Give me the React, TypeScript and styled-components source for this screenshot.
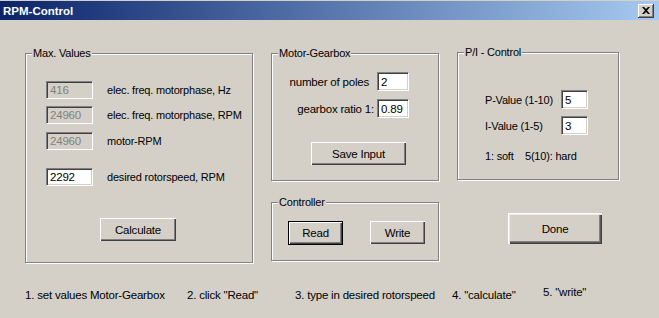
import React from 'react';
import styled, { createGlobalStyle } from 'styled-components';

const GlobalStyle = createGlobalStyle`
  html, body {
    margin: 0;
    padding: 0;
    background: #d4d0c8;
  }
`;

const face = '#d4d0c8';

const Window = styled.div`
  width: 659px;
  height: 318px;
  background: ${face};
  display: flex;
  flex-direction: column;
  overflow: hidden;
  font-family: 'Liberation Sans', Arial, sans-serif;
  font-size: 11px;
  letter-spacing: -0.2px;
  color: #000;
`;

const TitleBar = styled.div`
  height: 19px;
  margin-top: 1px;
  background: linear-gradient(to right, #0a246a, #a6caf0);
  display: flex;
  align-items: center;
  justify-content: space-between;
  padding: 0 5px 0 3px;
`;

const Title = styled.span`
  color: #fff;
  font-weight: bold;
  font-size: 11.5px;
  letter-spacing: 0;
`;

const CloseButton = styled.div`
  width: 16px;
  height: 14px;
  box-sizing: border-box;
  background: ${face};
  display: flex;
  align-items: center;
  justify-content: center;
  box-shadow: inset -1px -1px 0 #404040, inset 1px 1px 0 #fff, inset -2px -2px 0 #808080;
`;

const Body = styled.div`
  display: flex;
  flex-direction: column;
  padding: 33px 0 0 25px;
`;

const Columns = styled.div`
  display: flex;
  align-items: flex-start;
`;

const Column = styled.div<{ $left?: number; $top?: number }>`
  display: flex;
  flex-direction: column;
  margin-left: ${(p) => p.$left ?? 0}px;
  margin-top: ${(p) => p.$top ?? 0}px;
`;

const Group = styled.div<{ $w: number; $h: number; $top?: number }>`
  position: relative;
  box-sizing: border-box;
  width: ${(p) => p.$w - 1}px;
  height: ${(p) => p.$h - 1}px;
  margin-top: ${(p) => p.$top ?? 0}px;
  border: 1px solid #808080;
  box-shadow: inset 1px 1px 0 #fff, 1px 1px 0 #fff;
  display: flex;
  flex-direction: column;
`;

const Legend = styled.span`
  position: absolute;
  top: -7px;
  left: 6px;
  padding: 0 1px 0 1px;
  background: ${face};
  line-height: 13px;
`;

const Field = styled.div<{ $w: number; $h?: number; $disabled?: boolean }>`
  box-sizing: border-box;
  width: ${(p) => p.$w}px;
  height: ${(p) => p.$h ?? 18}px;
  flex-shrink: 0;
  background: ${(p) => (p.$disabled ? face : '#fff')};
  color: ${(p) => (p.$disabled ? '#808080' : '#000')};
  border-top: 1px solid #808080;
  border-left: 1px solid #808080;
  border-right: 1px solid #fff;
  border-bottom: 1px solid #fff;
  box-shadow: inset 1px 1px 0 #404040, inset -1px -1px 0 ${face};
  padding: 0 0 0 3px;
  display: flex;
  align-items: center;
  font-size: 11.5px;
`;

const ValueRows = styled.div`
  display: flex;
  flex-direction: column;
  padding: 27px 0 0 20px;
`;

const ValueRow = styled.div<{ $top: number }>`
  display: flex;
  align-items: center;
  gap: 14px;
  margin-top: ${(p) => p.$top}px;
`;

const Label = styled.span``;

const Button = styled.div<{ $w: number; $h?: number; $focused?: boolean; $default?: boolean }>`
  box-sizing: border-box;
  width: ${(p) => p.$w}px;
  height: ${(p) => p.$h ?? 23}px;
  background: ${face};
  display: flex;
  align-items: center;
  justify-content: center;
  font-size: 11.5px;
  ${(p) =>
    p.$focused
      ? `border: 1px solid #000;
         box-shadow: inset 1px 1px 0 #fff, inset -1px -1px 0 #404040, inset -2px -2px 0 #808080;`
      : p.$default
        ? `box-shadow: inset 1px 1px 0 #fff, inset 2px 2px 0 #eeeae2, inset -1px -1px 0 #404040, inset -2px -2px 0 #5a5a5a, inset -3px -3px 0 #808080;`
        : `box-shadow: inset 1px 1px 0 #fff, inset -1px -1px 0 #404040, inset -2px -2px 0 #808080;`}
`;

const ButtonSlot = styled.div<{ $left: number; $top: number }>`
  display: flex;
  margin: ${(p) => p.$top}px 0 0 ${(p) => p.$left}px;
`;

const ParamGrid = styled.div`
  display: grid;
  grid-template-columns: 105px 32px;
  row-gap: 8px;
  padding: 18px 0 0 0;
  align-items: center;
`;

const ParamLabel = styled.span<{ $pad: number }>`
  text-align: right;
  padding-right: ${(p) => p.$pad}px;
  font-size: 11.5px;
`;

const ButtonRow = styled.div`
  display: flex;
  gap: 27px;
  padding: 18px 0 0 16px;
`;

const PIGrid = styled.div`
  display: grid;
  grid-template-columns: 76px 27px;
  row-gap: 7px;
  padding: 37px 0 0 27px;
  align-items: center;
`;

const Note = styled.div`
  padding: 15px 0 0 27px;
  white-space: pre;
`;

const Steps = styled.div`
  display: grid;
  grid-template-columns: 162px 108px 157px 91px auto;
  margin-top: 26px;
  font-size: 11.5px;
`;

const Step = styled.span<{ $raise?: number }>`
  position: relative;
  top: ${(p) => -(p.$raise ?? 0)}px;
  white-space: nowrap;
`;

export default function App() {
  return (
    <>
      <GlobalStyle />
      <Window>
        <TitleBar>
          <Title>RPM-Control</Title>
          <CloseButton>
            <svg width="8" height="7" viewBox="0 0 8 7">
              <path d="M0 0h2l2 2 2-2h2L5 3.5 8 7H6L4 5 2 7H0l3-3.5z" fill="#000" />
            </svg>
          </CloseButton>
        </TitleBar>
        <Body>
          <Columns>
            <Column>
              <Group $w={229} $h={211}>
                <Legend>Max. Values</Legend>
                <ValueRows>
                  <ValueRow $top={0}>
                    <Field $w={47} $disabled>416</Field>
                    <Label>elec. freq. motorphase, Hz</Label>
                  </ValueRow>
                  <ValueRow $top={7}>
                    <Field $w={47} $disabled>24960</Field>
                    <Label>elec. freq. motorphase, RPM</Label>
                  </ValueRow>
                  <ValueRow $top={8}>
                    <Field $w={47} $disabled>24960</Field>
                    <Label>motor-RPM</Label>
                  </ValueRow>
                  <ValueRow $top={18}>
                    <Field $w={47}>2292</Field>
                    <Label>desired rotorspeed, RPM</Label>
                  </ValueRow>
                </ValueRows>
                <ButtonSlot $left={74} $top={32}>
                  <Button $w={76}>Calculate</Button>
                </ButtonSlot>
              </Group>
            </Column>
            <Column $left={18}>
              <Group $w={169} $h={129}>
                <Legend>Motor-Gearbox</Legend>
                <ParamGrid>
                  <ParamLabel $pad={8}>number of poles</ParamLabel>
                  <Field $w={32} $h={19}>2</Field>
                  <ParamLabel $pad={3}>gearbox ratio 1:</ParamLabel>
                  <Field $w={32} $h={19}>0.89</Field>
                </ParamGrid>
                <ButtonSlot $left={39} $top={24}>
                  <Button $w={95}>Save Input</Button>
                </ButtonSlot>
              </Group>
              <Group $w={169} $h={60} $top={21}>
                <Legend>Controller</Legend>
                <ButtonRow>
                  <Button $w={55} $h={24} $focused>Read</Button>
                  <Button $w={55}>Write</Button>
                </ButtonRow>
              </Group>
            </Column>
            <Column $left={18} $top={-1}>
              <Group $w={163} $h={129}>
                <Legend>P/I - Control</Legend>
                <PIGrid>
                  <Label>P-Value (1-10)</Label>
                  <Field $w={27} $h={19}>5</Field>
                  <Label>I-Value (1-5)</Label>
                  <Field $w={27} $h={19}>3</Field>
                </PIGrid>
                <Note>{'1: soft    5(10): hard'}</Note>
              </Group>
              <ButtonSlot $left={51} $top={33}>
                <Button $w={94} $h={31} $default>Done</Button>
              </ButtonSlot>
            </Column>
          </Columns>
          <Steps>
            <Step>1. set values Motor-Gearbox</Step>
            <Step>2. click "Read"</Step>
            <Step>3. type in desired rotorspeed</Step>
            <Step>4. "calculate"</Step>
            <Step $raise={3}>5. "write"</Step>
          </Steps>
        </Body>
      </Window>
    </>
  );
}
